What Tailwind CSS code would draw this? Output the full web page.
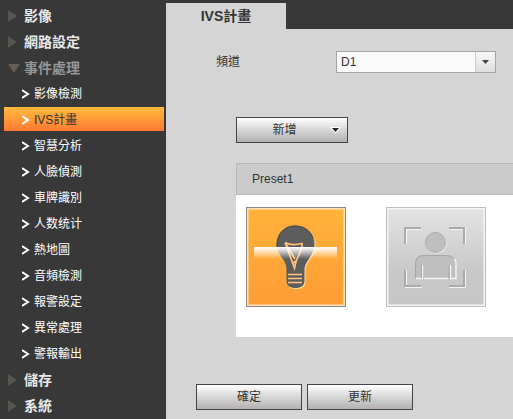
<!DOCTYPE html>
<html lang="zh-Hant">
<head>
    <meta charset="UTF-8">
    <meta name="viewport" content="width=device-width, initial-scale=1.0">
    <title>IVS計畫</title>
    <script src="https://cdn.jsdelivr.net/npm/@tailwindcss/browser@4"></script>
</head>
<body class="flex min-h-screen bg-[#383838] font-['Liberation_Sans','Noto_Sans_CJK_TC',sans-serif] text-xs text-[#333]">

    <!-- Sidebar menu -->
    <nav class="w-[166px] shrink-0 pt-[3px] text-white">
        <a href="#" class="flex h-[26px] items-center gap-[6px] pl-2 text-sm font-bold text-[#e8e8e8]">
            <svg class="h-3 w-[10px]" viewBox="0 0 10 12"><path d="M0 0L9 6L0 12z" fill="#575550"/></svg>
            影像
        </a>
        <a href="#" class="flex h-[26px] items-center gap-[6px] pl-2 text-sm font-bold text-[#e8e8e8]">
            <svg class="h-3 w-[10px]" viewBox="0 0 10 12"><path d="M0 0L9 6L0 12z" fill="#575550"/></svg>
            網路設定
        </a>
        <a href="#" class="flex h-[26px] items-center gap-[4px] pl-2 text-sm font-bold text-[#969696]">
            <svg class="h-[9px] w-3" viewBox="0 0 12 9"><path d="M0 0H12L6 9z" fill="#635d56"/></svg>
            事件處理
        </a>
        <ul>
            <li><a href="#" class="flex h-[26px] items-center gap-[4px] pl-[22px]"><svg class="h-[10px] w-2" viewBox="0 0 8 10"><path d="M0 1L6 5L0 9" fill="none" stroke="#fff" stroke-width="2"/></svg>影像檢測</a></li>
            <li class="h-[26px] pr-[2px] pl-1"><a href="#" class="flex h-6 items-center gap-[4px] bg-linear-to-b from-[#ffbb3c] to-[#ff7834] pt-[2px] pl-[18px] text-[#333]"><svg class="h-[10px] w-2" viewBox="0 0 8 10"><path d="M0 1L6 5L0 9" fill="none" stroke="#fff" stroke-width="2"/></svg>IVS計畫</a></li>
            <li><a href="#" class="flex h-[26px] items-center gap-[4px] pl-[22px]"><svg class="h-[10px] w-2" viewBox="0 0 8 10"><path d="M0 1L6 5L0 9" fill="none" stroke="#fff" stroke-width="2"/></svg>智慧分析</a></li>
            <li><a href="#" class="flex h-[26px] items-center gap-[4px] pl-[22px]"><svg class="h-[10px] w-2" viewBox="0 0 8 10"><path d="M0 1L6 5L0 9" fill="none" stroke="#fff" stroke-width="2"/></svg>人臉偵測</a></li>
            <li><a href="#" class="flex h-[26px] items-center gap-[4px] pl-[22px]"><svg class="h-[10px] w-2" viewBox="0 0 8 10"><path d="M0 1L6 5L0 9" fill="none" stroke="#fff" stroke-width="2"/></svg>車牌識別</a></li>
            <li><a href="#" class="flex h-[26px] items-center gap-[4px] pl-[22px]"><svg class="h-[10px] w-2" viewBox="0 0 8 10"><path d="M0 1L6 5L0 9" fill="none" stroke="#fff" stroke-width="2"/></svg>人数统计</a></li>
            <li><a href="#" class="flex h-[26px] items-center gap-[4px] pl-[22px]"><svg class="h-[10px] w-2" viewBox="0 0 8 10"><path d="M0 1L6 5L0 9" fill="none" stroke="#fff" stroke-width="2"/></svg>熱地圖</a></li>
            <li><a href="#" class="flex h-[26px] items-center gap-[4px] pl-[22px]"><svg class="h-[10px] w-2" viewBox="0 0 8 10"><path d="M0 1L6 5L0 9" fill="none" stroke="#fff" stroke-width="2"/></svg>音頻檢測</a></li>
            <li><a href="#" class="flex h-[26px] items-center gap-[4px] pl-[22px]"><svg class="h-[10px] w-2" viewBox="0 0 8 10"><path d="M0 1L6 5L0 9" fill="none" stroke="#fff" stroke-width="2"/></svg>報警設定</a></li>
            <li><a href="#" class="flex h-[26px] items-center gap-[4px] pl-[22px]"><svg class="h-[10px] w-2" viewBox="0 0 8 10"><path d="M0 1L6 5L0 9" fill="none" stroke="#fff" stroke-width="2"/></svg>異常處理</a></li>
            <li><a href="#" class="flex h-[26px] items-center gap-[4px] pl-[22px]"><svg class="h-[10px] w-2" viewBox="0 0 8 10"><path d="M0 1L6 5L0 9" fill="none" stroke="#fff" stroke-width="2"/></svg>警報輸出</a></li>
        </ul>
        <a href="#" class="flex h-[26px] items-center gap-[6px] pl-2 text-sm font-bold text-[#e8e8e8]">
            <svg class="h-3 w-[10px]" viewBox="0 0 10 12"><path d="M0 0L9 6L0 12z" fill="#575550"/></svg>
            儲存
        </a>
        <a href="#" class="flex h-[26px] items-center gap-[6px] pl-2 text-sm font-bold text-[#e8e8e8]">
            <svg class="h-3 w-[10px]" viewBox="0 0 10 12"><path d="M0 0L9 6L0 12z" fill="#575550"/></svg>
            系統
        </a>
    </nav>

    <!-- Main area -->
    <main class="flex min-w-0 flex-1 flex-col pt-[3px]">
        <h1 class="flex h-[26px] w-[120px] items-center justify-center bg-[#d5d5d5] text-sm font-bold">IVS計畫</h1>

        <div class="flex-1 bg-[#d5d5d5] pt-[22px] pb-2">
            <div class="flex items-center pl-[50px]">
                <label for="channel" class="w-[120px]">頻道</label>
                <div class="relative w-40">
                    <select id="channel" class="block h-[22px] w-full appearance-none border border-[#a5a5a5] bg-[#fafafa] pl-1 text-xs">
                        <option>D1</option>
                    </select>
                    <span class="pointer-events-none absolute inset-y-px right-px flex w-5 items-center justify-center border-l border-[#ccc] bg-linear-to-b from-[#f8f8f8] to-[#dedede]">
                        <svg class="h-1 w-[7px]" viewBox="0 0 7 4"><path d="M0 0H7L3.5 4z" fill="#444"/></svg>
                    </span>
                </div>
            </div>

            <button type="button" class="mt-11 ml-[70px] flex h-[26px] w-28 items-center border border-[#444] bg-linear-to-b from-white to-[#b2b0b0] pr-2">
                <span class="flex-1 text-center">新增</span>
                <svg class="h-1 w-[7px] overflow-visible" viewBox="0 0 7 4"><path d="M0 0H7L3.5 4z" fill="#222" stroke="#fff" stroke-width="2" paint-order="stroke"/></svg>
            </button>

            <!-- Preset rules -->
            <section class="mt-5 ml-[70px] bg-white">
                <h2 class="flex h-8 items-center border border-r-0 border-[#b9b9b9] bg-[#cbcbcb] pl-[15px]">Preset1</h2>
                <div class="flex gap-10 px-[10px] pt-3 pb-[30px]">
                    <button type="button" aria-label="智慧分析" class="size-[100px] shrink-0 border border-[#888]">
                        <svg class="size-full" viewBox="0 0 98 98">
                            <defs>
                                <linearGradient id="orange" x2="0" y2="1"><stop offset="0" stop-color="#ffb33a"/><stop offset="1" stop-color="#ff9c35"/></linearGradient>
                                <linearGradient id="beam" x2="0" y2="1"><stop offset="0" stop-color="#fff"/><stop offset="0.3" stop-color="#fff" stop-opacity="0.75"/><stop offset="1" stop-color="#fff" stop-opacity="0"/></linearGradient>
                            </defs>
                            <rect x="0.5" y="0.5" width="97" height="97" fill="url(#orange)" stroke="#ffe3b8" stroke-width="2"/>
                            <path d="M48 17.5C37 17.5 29.5 26 29.5 36C29.5 42 32 45 35 50C38 54 39.5 57 39.5 62V73C39.5 77.5 43 80 48.5 80C54 80 57.5 77.5 57.5 73V62C57.5 57 60 54 62.5 50C65.500 45 67.5 42 67.5 36C67.5 26 60 17.5 48 17.5z" transform="translate(1 1)" fill="#ffdb9f"/>
                            <path d="M48 17.5C37 17.5 29.5 26 29.5 36C29.5 42 32 45 35 50C38 54 39.5 57 39.5 62V73C39.5 77.5 43 80 48.5 80C54 80 57.5 77.5 57.5 73V62C57.5 57 60 54 62.5 50C65.500 45 67.5 42 67.5 36C67.5 26 60 17.5 48 17.5z" fill="#5d5d5d"/>
                            <path d="M30 41C29 28 36 18 48 18C57 18 63 23 66 30" fill="none" stroke="#484848"/>
                            <path d="M38 34.5Q43 37 48 36.5T55 35.5V39.5L49 53.5L47.5 60L38 34.5L48 51M49 53L46 55" fill="none" stroke="#ffc478" stroke-width="1.7"/>
                            <path d="M41 66.500H55M41 70.500H55M41 74.500H55" stroke="#ffc681" stroke-width="1.5"/>
                            <rect x="7" y="39" width="83" height="12" fill="url(#beam)"/>
                        </svg>
                    </button>
                    <button type="button" aria-label="人臉偵測" class="size-[100px] shrink-0 border border-[#bdbdbd]">
                        <svg class="size-full" viewBox="0 0 98 98" fill="none">
                            <defs>
                                <linearGradient id="grey" x2="0" y2="1"><stop offset="0" stop-color="#e3e3e3"/><stop offset="0.65" stop-color="#c8c8c8"/><stop offset="1" stop-color="#c6c6c6"/></linearGradient>
                            </defs>
                            <rect x="0.5" y="0.5" width="97" height="97" fill="url(#grey)" stroke="#f4f4f4" stroke-width="2"/>
                            <!-- corner brackets with a light edge below and to the right -->
                            <path d="M19.5 36V21.5H35M63 21.5H76M78.5 19V36" stroke="#f4f4f4"/>
                            <path d="M18 36V20H34M62 20H77V36M18 62V78H34M62 78H77V62" stroke="#aaa" stroke-width="2"/>
                            <path d="M19.5 62V77M18 79.500H35M62 79.500H78.5V62" stroke="#f4f4f4"/>
                            <circle cx="49" cy="35" r="10.5" fill="#f4f4f4"/>
                            <circle cx="48.5" cy="34.500" r="10" fill="#bfbfbf" stroke="#aaa"/>
                            <path d="M28.5 71V56Q28.5 47.5 37 47.5H60Q68.5 47.5 68.5 56V71z" fill="#bfbfbf"/>
                            <path d="M28.5 70V56Q28.5 47.500 37 47.5H60Q65 47.5 67.500 51" stroke="#a6a6a6"/>
                            <path d="M67.5 51Q69 53 69 56V70.5H63.5V57M61 70.5H37M35.5 57V70.5H29" stroke="#f4f4f4" stroke-width="1.4"/>
                            <path d="M34.500 57V70M62 57V70" stroke="#a6a6a6"/>
                        </svg>
                    </button>
                </div>
            </section>

            <div class="mt-[47px] ml-[30px] flex gap-[5px]">
                <button type="button" class="h-[26px] w-[106px] border border-[#444] bg-linear-to-b from-white to-[#b2b0b0]">確定</button>
                <button type="button" class="h-[26px] w-[106px] border border-[#444] bg-linear-to-b from-white to-[#b2b0b0]">更新</button>
            </div>
        </div>
    </main>
</body>
</html>
